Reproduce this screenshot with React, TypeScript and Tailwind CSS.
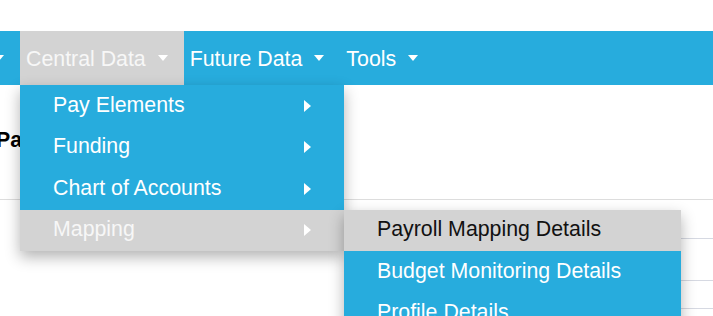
import type {JSX} from 'react';

const menuItems = ["Pay Elements", "Funding", "Chart of Accounts", "Mapping"];
const subItems = ["Payroll Mapping Details", "Budget Monitoring Details", "Profile Details"];

function DownCaret(): JSX.Element {
    return <span className="ml-[12px] inline-block w-0 h-0 border-t-[6px] border-t-white border-x-[5.5px] border-x-transparent"/>;
}

function RightCaret(): JSX.Element {
    return <span className="inline-block w-0 h-0 border-l-[7px] border-l-white border-y-[6px] border-y-transparent"/>;
}

function NavItem({label, active, children}: {label: string; active?: boolean; children?: JSX.Element}): JSX.Element {
    return (
        <div className={`relative shrink-0 flex items-center h-full pl-[6px] pr-[16px] ${active ? "bg-[#d3d3d3] text-[#f7f7f7]" : "text-white"}`}>
            <span className="whitespace-nowrap pt-[3px]">{label}</span>
            <DownCaret/>
            {children}
        </div>
    );
}

function SubMenu(): JSX.Element {
    return (
        <div className="absolute left-full top-0 w-[337px] bg-[#27acdd] shadow-[0_6px_14px_rgba(0,0,0,0.3)] z-20">
            {subItems.map((item, i) => (
                <div key={item}
                     className={`h-[41.5px] flex items-center pl-[33px] whitespace-nowrap ${i === 0 ? "bg-[#d3d3d3] text-[#111]" : "text-white"}`}>
                    {item}
                </div>
            ))}
        </div>
    );
}

function DropDown(): JSX.Element {
    return (
        <div className="absolute left-0 top-full w-[324px] bg-[#27acdd] shadow-[0_6px_14px_rgba(0,0,0,0.3)] z-10">
            {menuItems.map((item) => {
                const active = item === "Mapping";
                return (
                    <div key={item}
                         className={`relative h-[41.5px] flex items-center justify-between pl-[33px] pr-[33px] whitespace-nowrap ${active ? "bg-[#d3d3d3] text-[#f7f7f7]" : "text-white"}`}>
                        <span>{item}</span>
                        <RightCaret/>
                        {active && <SubMenu/>}
                    </div>
                );
            })}
        </div>
    );
}

export default function App(): JSX.Element {
    return (
        <div className="w-[713px] h-[316px] overflow-hidden bg-white font-['Liberation_Sans',Arial,sans-serif] text-[21.33px]">
            <div className="h-[31px]"/>
            <nav className="relative z-10 h-[54px] bg-[#27acdd] flex items-stretch">
                <div className="w-[20px] shrink-0 flex justify-end">
                    <NavItem label="Employee Data"/>
                </div>
                <NavItem label="Central Data" active>
                    <DropDown/>
                </NavItem>
                <NavItem label="Future Data"/>
                <NavItem label="Tools"/>
            </nav>
            <div className="pt-[42px]">
                <h2 className="-ml-[4px] font-bold text-black leading-[26px] whitespace-nowrap">Payroll Mapping</h2>
            </div>
            <div className="mt-[46px] border-t border-[#dddddd] flex">
                <div className="w-[400px] shrink-0"/>
                <div className="flex-1 flex flex-col">
                    <div className="h-[39px] border-b border-[#d6d9e2]"/>
                    <div className="h-[42px] border-b border-[#d6d9e2]"/>
                    <div className="h-[28px] border-b border-[#d6d9e2]"/>
                </div>
            </div>
        </div>
    );
}
